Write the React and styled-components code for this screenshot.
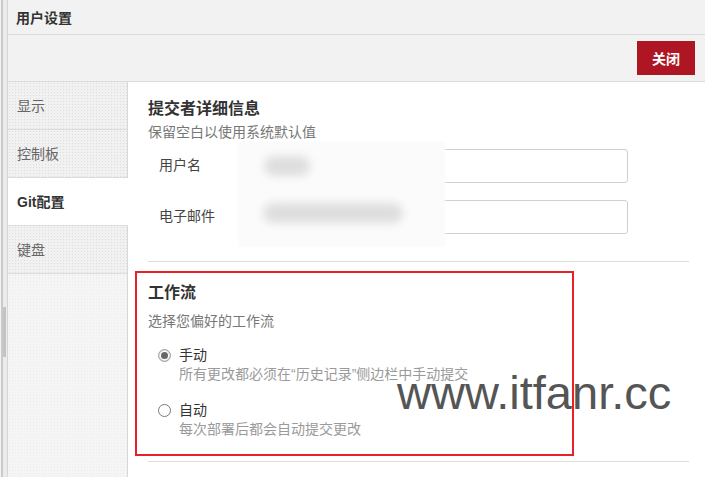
import React, { useState } from "react";
import styled, { createGlobalStyle } from "styled-components";

const Global = createGlobalStyle`
  html, body { margin: 0; padding: 0; background: #fff; }
  body {
    font-family: "Liberation Sans", "Noto Sans CJK SC", sans-serif;
    font-size: 14px;
    color: #333;
  }
`;

const cjk = `"Liberation Sans", "Noto Sans CJK SC", sans-serif`;

const Window = styled.div`
  display: flex;
  height: 477px;
  overflow: hidden;
  position: relative;
`;

const Gutter = styled.div`
  width: 8px;
  flex-shrink: 0;
  display: flex;
  flex-direction: column;
  padding-top: 307px;
  box-sizing: border-box;
  background: linear-gradient(
    to right,
    #f4f4f4 0 1px,
    #c9c9c9 1px 3px,
    #ececec 3px 8px
  );
  border-right: 1px solid #d6d6d6;
`;

const ScrollThumb = styled.div`
  margin-left: 3px;
  width: 3px;
  height: 50px;
  background: #c4c4c4;
`;

const Main = styled.div`
  flex: 1;
  display: flex;
  flex-direction: column;
  min-width: 0;
`;

const TitleBar = styled.div`
  height: 34px;
  display: flex;
  align-items: center;
  padding-left: 8px;
  background: #f2f2f2;
  border-bottom: 1px solid #dcdcdc;
  font-family: ${cjk};
  font-weight: bold;
  font-size: 14px;
  color: #333;
`;

const Toolbar = styled.div`
  height: 46px;
  display: flex;
  align-items: center;
  justify-content: flex-end;
  padding-right: 10px;
  background: #f2f2f2;
  border-bottom: 1px solid #dcdcdc;
`;

const CloseButton = styled.button`
  width: 58px;
  height: 34px;
  border: none;
  border-radius: 0;
  background: #ae1624;
  color: #fff;
  font-family: ${cjk};
  font-size: 14px;
  font-weight: bold;
  cursor: pointer;
`;

const Body = styled.div`
  flex: 1;
  display: flex;
  min-height: 0;
`;

const dots = `
  background-color: #f1f1f1;
  background-image: radial-gradient(#dcdcdc 0.6px, transparent 0.8px);
  background-size: 3px 3px;
`;

const Sidebar = styled.nav`
  width: 120px;
  flex-shrink: 0;
  display: flex;
  flex-direction: column;
  box-sizing: border-box;
  border-right: 1px solid #d8d8d8;
  background-color: #f5f5f5;
  background-image: radial-gradient(#ebebeb 0.6px, transparent 0.8px);
  background-size: 3px 3px;
`;

const Tab = styled.div`
  display: flex;
  align-items: center;
  padding-left: 9px;
  padding-bottom: 2px;
  box-sizing: border-box;
  height: 48px;
  border-bottom: 1px solid #dcdcdc;
  font-family: ${cjk};
  font-size: 14px;
  cursor: pointer;
  ${(p) =>
    p.$active
      ? `background: #fff; color: #333; font-weight: bold; margin-right: -1px;`
      : `${dots} color: #666;`}
`;

const Content = styled.main`
  flex: 1;
  padding: 16px 16px 0 20px;
  min-width: 0;
`;

const Section = styled.section`
  padding-bottom: ${(p) => p.$pb || 26}px;
  border-bottom: 1px solid #ddd;
  padding-top: ${(p) => p.$pt || 0}px;
`;

const Heading = styled.h3`
  margin: 0;
  font-family: ${cjk};
  font-size: 16px;
  line-height: 22px;
  font-weight: bold;
  color: #333;
`;

const Hint = styled.p`
  margin: ${(p) => p.$mt || 2}px 0 0;
  font-family: ${cjk};
  font-size: 14px;
  line-height: 20px;
  color: #777;
`;

const Fields = styled.div`
  position: relative;
  margin-top: 7px;
  display: flex;
  flex-direction: column;
  gap: 17px;
  width: 480px;
`;

const FieldRow = styled.label`
  display: grid;
  grid-template-columns: 106px 1fr;
  align-items: center;
  padding-left: 11px;
`;

const FieldLabel = styled.span`
  font-family: ${cjk};
  font-size: 14px;
  color: #444;
  margin-top: -5px;
`;

const Input = styled.input`
  height: 34px;
  box-sizing: border-box;
  border: 1px solid #cfcfcf;
  border-radius: 3px;
  padding: 0 8px;
  font-size: 14px;
  outline: none;
`;

const BlurPatch = styled.div`
  position: absolute;
  left: 91px;
  top: -7px;
  width: 205px;
  height: 104px;
  background: #fbfbfb;
  box-shadow: 0 0 3px 1px #fcfcfc;
`;

const Blob = styled.div`
  position: absolute;
  left: ${(p) => p.$x}px;
  top: ${(p) => p.$y}px;
  width: ${(p) => p.$w}px;
  height: 20px;
  border-radius: 10px;
  background: #dedede;
  filter: blur(4px);
`;

const Options = styled.div`
  margin-top: 14px;
  display: flex;
  flex-direction: column;
  gap: 16px;
  padding-left: 10px;
`;

const Option = styled.label`
  display: grid;
  grid-template-columns: 21px 1fr;
  align-items: center;
  cursor: pointer;
`;

const Radio = styled.span`
  width: 13px;
  height: 13px;
  box-sizing: border-box;
  border-radius: 50%;
  border: 1px solid #777;
  background: #fff;
  display: flex;
  align-items: center;
  justify-content: center;
  &::after {
    content: "";
    width: 7px;
    height: 7px;
    border-radius: 50%;
    background: ${(p) => (p.$checked ? "#666" : "transparent")};
  }
  ${(p) => p.$checked && `border-color: #999; box-shadow: inset 0 0 0 1px #ddd;`}
`;

const OptionTitle = styled.span`
  font-family: ${cjk};
  font-size: 14px;
  line-height: 20px;
  color: #333;
`;

const OptionDesc = styled.span`
  grid-column: 2;
  font-family: ${cjk};
  font-size: 14px;
  line-height: 19px;
  color: #9a9a9a;
`;

const Highlight = styled.div`
  position: absolute;
  left: 135px;
  top: 271px;
  width: 439px;
  height: 185px;
  box-sizing: border-box;
  border: 2px solid #e8202a;
  pointer-events: none;
`;

const Watermark = styled.div`
  position: absolute;
  left: 397px;
  top: 366px;
  font-family: "Liberation Sans", Arial, sans-serif;
  font-size: 47px;
  line-height: 54px;
  color: #555;
  pointer-events: none;
`;

const tabs = ["显示", "控制板", "Git配置", "键盘"];

export default function App() {
  const [tab, setTab] = useState(2);
  const [flow, setFlow] = useState("manual");

  return (
    <>
      <Global />
      <Window>
        <Gutter>
          <ScrollThumb />
        </Gutter>
        <Main>
          <TitleBar>用户设置</TitleBar>
          <Toolbar>
            <CloseButton>关闭</CloseButton>
          </Toolbar>
          <Body>
            <Sidebar>
              {tabs.map((t, i) => (
                <Tab key={t} $active={i === tab} onClick={() => setTab(i)}>
                  {t}
                </Tab>
              ))}
            </Sidebar>
            <Content>
              <Section $pb={27}>
                <Heading>提交者详细信息</Heading>
                <Hint>保留空白以使用系统默认值</Hint>
                <Fields>
                  <FieldRow>
                    <FieldLabel>用户名</FieldLabel>
                    <Input />
                  </FieldRow>
                  <FieldRow>
                    <FieldLabel>电子邮件</FieldLabel>
                    <Input />
                  </FieldRow>
                  <BlurPatch>
                    <Blob $x={25} $y={14} $w={46} />
                    <Blob $x={24} $y={61} $w={140} />
                  </BlurPatch>
                </Fields>
              </Section>
              <Section $pt={20} $pb={22}>
                <Heading>工作流</Heading>
                <Hint $mt={7}>选择您偏好的工作流</Hint>
                <Options>
                  <Option onClick={() => setFlow("manual")}>
                    <Radio $checked={flow === "manual"} />
                    <OptionTitle>手动</OptionTitle>
                    <OptionDesc>所有更改都必须在“历史记录”侧边栏中手动提交</OptionDesc>
                  </Option>
                  <Option onClick={() => setFlow("auto")}>
                    <Radio $checked={flow === "auto"} />
                    <OptionTitle>自动</OptionTitle>
                    <OptionDesc>每次部署后都会自动提交更改</OptionDesc>
                  </Option>
                </Options>
              </Section>
            </Content>
          </Body>
        </Main>
        <Watermark>www.itfanr.cc</Watermark>
        <Highlight />
      </Window>
    </>
  );
}
